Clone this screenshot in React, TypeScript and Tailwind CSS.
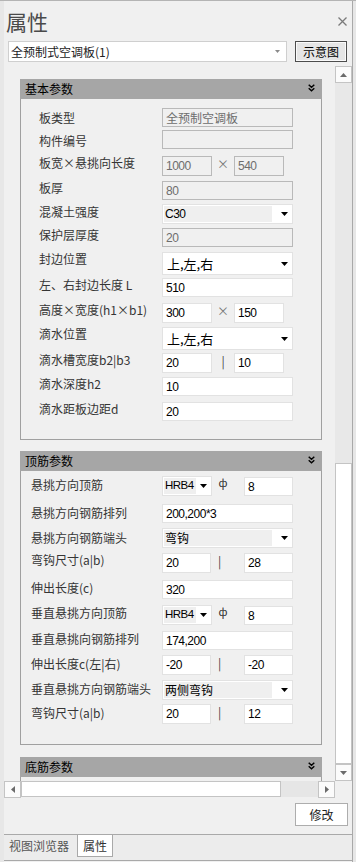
import React from "react";

const num = "font-['Liberation_Sans','Noto_Sans_CJK_SC',sans-serif] tracking-[-0.5px]";

function Tri({ c = "#000" }: { c?: string }) {
  return (
    <svg width="7" height="4" viewBox="0 0 7 4">
      <path d="M0 0H7L3.5 4Z" fill={c} />
    </svg>
  );
}

function Chevrons() {
  return (
    <svg width="7" height="8" viewBox="0 0 7 8" className="mb-[3px]">
      <path d="M0.7 0.7L3.5 3.3L6.3 0.7M0.7 4.2L3.5 6.8L6.3 4.2" stroke="#000" strokeWidth="1.4" fill="none" />
    </svg>
  );
}

function Box({ v, ro, w = "w-[131px]", h = "h-[19px]", cn = false }: { v: string; ro?: boolean; w?: string; h?: string; cn?: boolean }) {
  return (
    <div
      className={`${w} ${h} shrink-0 border flex items-center pl-[3px] text-[12px] overflow-hidden whitespace-nowrap ${cn ? "" : num} ${
        ro ? "bg-[#f0f0f0] border-[#b9b9b9] text-[#6d6d6d]" : "bg-white border-[#e2e2e2] text-black"
      }`}
    >
      {v}
    </div>
  );
}

function Sel({ v, w = "w-[131px]", h = "h-[20px]", inner = "w-[108px]", gray = true, big = false, mono = false, small = false }: { v: string; w?: string; h?: string; inner?: string; gray?: boolean; big?: boolean; mono?: boolean; small?: boolean }) {
  return (
    <div className={`${w} ${h} shrink-0 bg-white border border-[#e2e2e2] flex items-center pl-[1px] pr-[4px]`}>
      <div className={`${inner} h-full py-[1px]`}>
        <div
          className={`h-full flex items-center overflow-hidden whitespace-nowrap text-black ${gray ? "bg-[#efefef] pl-[1px]" : "pl-[3px]"} ${
            big ? "text-[13px]" : small ? "text-[11.5px]" : "text-[12px]"
          } ${mono ? num : ""}`}
        >
          {v}
        </div>
      </div>
      <div className="flex-1 flex justify-end">
        <Tri />
      </div>
    </div>
  );
}

function Pair({ a, b, sym, ro, wide }: { a: string; b: string; sym: string; ro?: boolean; wide?: boolean }) {
  return (
    <div className="flex items-start">
      <Box v={a} ro={ro} w={wide ? "w-[49px]" : "w-[50px]"} h="h-[20px]" />
      <div className={`${wide ? "w-[33px] pr-[16px]" : "w-[22px]"} flex justify-center pt-[1px] text-[12px] leading-[13px] ${sym === "|" ? "text-[#444]" : "text-[#777]"}`}>
        {sym}
      </div>
      <Box v={b} ro={ro} w={wide ? "w-[49px]" : "w-[50px]"} h="h-[20px]" />
    </div>
  );
}

function Rebar({ d }: { d: string }) {
  return (
    <div className="flex items-start">
      <Sel v="HRB4" w="w-[50px]" inner="w-[32px]" mono small />
      <div className="w-[32px] flex justify-center text-[11px] leading-[11px] text-[#333] pt-[1px] pr-[10px]">ф</div>
      <div className="mt-[1px]">
        <Box v={d} w="w-[49px]" />
      </div>
    </div>
  );
}

type Row = { label: string; h: string; lt: string; c: React.ReactNode };

const basic: Row[] = [
  { label: "板类型", h: "h-[22px]", lt: "pt-[3px]", c: <Box v="全预制空调板" ro cn /> },
  { label: "构件编号", h: "h-[26px]", lt: "pt-[4px]", c: <Box v="" ro /> },
  { label: "板宽×悬挑向长度", h: "h-[25px]", lt: "pt-0", c: <Pair a="1000" b="540" sym="×" ro /> },
  { label: "板厚", h: "h-[23px]", lt: "pt-0", c: <Box v="80" ro /> },
  { label: "混凝土强度", h: "h-[24px]", lt: "pt-[1px]", c: <Sel v="C30" mono /> },
  { label: "保护层厚度", h: "h-[24px]", lt: "pt-0", c: <Box v="20" ro /> },
  { label: "封边位置", h: "h-[26px]", lt: "pt-0", c: <Sel v="上,左,右" h="h-[23px]" gray={false} big /> },
  { label: "左、右封边长度 L", h: "h-[25px]", lt: "pt-0", c: <Box v="510" /> },
  { label: "高度×宽度(h1×b1)", h: "h-[24px]", lt: "pt-0", c: <Pair a="300" b="150" sym="×" /> },
  { label: "滴水位置", h: "h-[26px]", lt: "pt-0", c: <Sel v="上,左,右" h="h-[23px]" gray={false} big /> },
  { label: "滴水槽宽度b2|b3", h: "h-[24px]", lt: "pt-0", c: <Pair a="20" b="10" sym="|" /> },
  { label: "滴水深度h2", h: "h-[25px]", lt: "pt-0", c: <Box v="10" /> },
  { label: "滴水距板边距d", h: "h-[19px]", lt: "pt-0", c: <Box v="20" /> },
];

const top: Row[] = [
  { label: "悬挑方向顶筋", h: "h-[28px]", lt: "pt-[2px]", c: <Rebar d="8" /> },
  { label: "悬挑方向钢筋排列", h: "h-[24px]", lt: "pt-[2px]", c: <Box v="200,200*3" /> },
  { label: "悬挑方向钢筋端头", h: "h-[25px]", lt: "pt-[3px]", c: <Sel v="弯钩" /> },
  { label: "弯钩尺寸(a|b)", h: "h-[27px]", lt: "pt-0", c: <Pair a="20" b="28" sym="|" wide /> },
  { label: "伸出长度(c)", h: "h-[25px]", lt: "pt-[1px]", c: <Box v="320" /> },
  { label: "垂直悬挑方向顶筋", h: "h-[26px]", lt: "pt-[1px]", c: <Rebar d="8" /> },
  { label: "垂直悬挑向钢筋排列", h: "h-[24px]", lt: "pt-[1px]", c: <Box v="174,200" /> },
  { label: "伸出长度c(左|右)", h: "h-[25px]", lt: "pt-[2px]", c: <Pair a="-20" b="-20" sym="|" wide /> },
  { label: "垂直悬挑方向钢筋端头", h: "h-[24px]", lt: "pt-[2px]", c: <Sel v="两侧弯钩" /> },
  { label: "弯钩尺寸(a|b)", h: "h-[19px]", lt: "pt-[2px]", c: <Pair a="20" b="12" sym="|" wide /> },
];

function Group({ title, rows, pl, lw, pt, pb, mt }: { title: string; rows: Row[]; pl: string; lw: string; pt: string; pb: string; mt: string }) {
  return (
    <div className={`w-[302px] ml-[16px] ${mt} shrink-0`}>
      <div className="h-[20px] bg-[#a6a6a6] flex items-center justify-between pl-[5px] pr-[7px] text-[12px] text-black">
        <span>{title}</span>
        <Chevrons />
      </div>
      <div className={`border-x border-b border-[#a0a0a0] ${pl} ${pt} ${pb}`}>
        {rows.map((r, i) => (
          <div key={i} className={`flex items-start ${r.h}`}>
            <div className={`${lw} shrink-0 text-[12px] leading-[13px] text-[#353535] whitespace-nowrap ${r.lt}`}>{r.label}</div>
            {r.c}
          </div>
        ))}
      </div>
    </div>
  );
}

function ScrollBtn({ dir }: { dir: "up" | "down" | "left" | "right" }) {
  const d = { up: "M0 4H7L3.5 0Z", down: "M0 0H7L3.5 4Z", left: "M4 0V7L0 3.5Z", right: "M0 0V7L4 3.5Z" }[dir];
  const v = dir === "up" || dir === "down";
  return (
    <div className="w-[17px] h-[17px] shrink-0 bg-[#fbfbfb] border border-[#c4c4c4] flex items-center justify-center">
      <svg width={v ? 7 : 4} height={v ? 4 : 7} viewBox={v ? "0 0 7 4" : "0 0 4 7"}>
        <path d={d} fill="#6a6a6a" />
      </svg>
    </div>
  );
}

export default function App() {
  return (
    <div className="w-[356px] h-[862px] flex bg-[#e7e7e7] border-t border-[#b4b4b4] font-['Noto_Sans_CJK_SC',sans-serif] overflow-hidden">
      <div className="w-[4px] shrink-0" />
      <div className="w-[349px] shrink-0 flex flex-col bg-[#f0f0f0] border-r border-[#a9a9a9]">
        <div className="h-[40px] shrink-0 flex items-center justify-between pl-[2px] pr-[5px]">
          <span className="text-[21px] leading-[40px] text-[#4a4a4a]">属性</span>
          <svg width="9" height="9" viewBox="0 0 9 9">
            <path d="M0.5 0.5L8.5 8.5M8.5 0.5L0.5 8.5" stroke="#7a7a7a" strokeWidth="1.3" />
          </svg>
        </div>
        <div className="h-[21px] shrink-0 flex">
          <div className="ml-[4px] w-[279px] h-[21px] bg-white border border-[#cfcfcf] flex items-center justify-between pl-[2px] pr-[6px] text-[12px] text-[#222]">
            <span>全预制式空调板(1)</span>
            <svg width="5" height="3" viewBox="0 0 5 3">
              <path d="M0 0H5L2.5 3Z" fill="#8a8a8a" />
            </svg>
          </div>
          <div className="ml-[8px] w-[52px] h-[21px] bg-[#e5e5e5] border border-[#4d4d4d] shadow-[inset_0_0_0_1px_#fafafa] flex items-center justify-center text-[12px] text-black">
            示意图
          </div>
        </div>
        <div className="h-[715px] mt-[4px] shrink-0 flex">
          <div className="w-[331px] h-full overflow-hidden flex flex-col pt-[13px]">
            <Group title="基本参数" rows={basic} pl="pl-[18px]" lw="w-[123px]" pt="pt-[9px]" pb="pb-[18px]" mt="mt-0" />
            <Group title="顶筋参数" rows={top} pl="pl-[10px]" lw="w-[131px]" pt="pt-[5px]" pb="pb-[21px]" mt="mt-[11px]" />
            <div className="w-[302px] ml-[16px] mt-[12px] shrink-0">
              <div className="h-[20px] bg-[#a6a6a6] flex items-center justify-between pl-[5px] pr-[7px] text-[12px] text-black">
                <span>底筋参数</span>
                <Chevrons />
              </div>
              <div className="h-[200px] border-x border-[#a0a0a0]" />
            </div>
          </div>
          <div className="w-[17px] h-full flex flex-col bg-[#e8e8e8]">
            <ScrollBtn dir="up" />
            <div className="h-[380px] shrink-0" />
            <div className="h-[301px] shrink-0 bg-white border border-[#c4c4c4]" />
            <ScrollBtn dir="down" />
          </div>
        </div>
        <div className="h-[16px] shrink-0 flex w-[331px] bg-[#e6e6e6]">
          <ScrollBtn dir="left" />
          <div className="w-[260px] h-[16px] bg-white border border-[#c4c4c4]" />
          <div className="flex-1" />
          <ScrollBtn dir="right" />
        </div>
        <div className="h-[37px] shrink-0 flex justify-end items-start pt-[6px] pr-[4px]">
          <div className="w-[53px] h-[23px] bg-white border border-[#adadad] flex items-center justify-center text-[12px] text-[#222]">修改</div>
        </div>
        <div className="h-[27px] shrink-0 flex items-start border-t border-b border-[#a9a9a9] bg-[#ececec]">
          <div className="pl-[5px] w-[73px] leading-[20px] pt-[1px] text-[12px] text-[#555]">视图浏览器</div>
          <div className="w-[36px] h-[22px] bg-white border-x border-b border-[#a9a9a9] flex items-center justify-center text-[12px] text-[#333]">属性</div>
        </div>
      </div>
      <div className="w-[3px] shrink-0" />
    </div>
  );
}
